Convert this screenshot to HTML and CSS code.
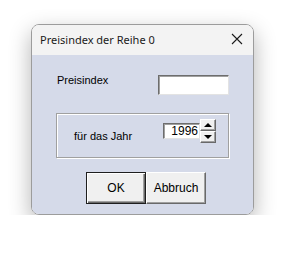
FILE: index.html
```html
<!DOCTYPE html>
<html lang="de">
<head>
    <meta charset="UTF-8">
    <title>Preisindex der Reihe 0</title>
    <link rel="stylesheet" href="styles.css">
</head>
<body>
    <div class="dialog">
        <div class="titlebar">
            <span class="title">Preisindex der Reihe 0</span>
            <svg class="close" width="12" height="12" viewBox="0 0 12 12">
                <path d="M1 1 L11 11 M11 1 L1 11" stroke="#1b1b1b" stroke-width="1.1" fill="none"/>
            </svg>
        </div>
        <div class="client">
            <div class="price-row">
                <span class="label">Preisindex</span>
                <input type="text" class="field price-field">
            </div>
            <div class="group">
                <span class="label year-label">für das Jahr</span>
                <input type="text" class="field year-field" value="1996">
                <div class="spin">
                    <div class="spin-btn up"><span class="arrow-up"></span></div>
                    <div class="spin-btn down"><span class="arrow-down"></span></div>
                </div>
            </div>
            <div class="buttons">
                <button class="btn default">OK</button>
                <button class="btn">Abbruch</button>
            </div>
        </div>
    </div>
</body>
</html>
```

FILE: styles.css
```css
body {
    margin: 0;
    padding: 24px 0 0 31px;
    background-color: #ffffff;
    font-family: "Liberation Sans", Arial, sans-serif;
}
.dialog {
    width: 223px;
    height: 191px;
    box-sizing: border-box;
    border: 1px solid #9c9c9c;
    border-radius: 8px;
    overflow: hidden;
    box-shadow: 0 8px 22px rgba(0,0,0,0.3);
}
.titlebar {
    height: 30px;
    background-color: #f3f3f3;
    display: flex;
    align-items: center;
    justify-content: space-between;
    padding: 0 10px 0 8px;
}
.title {
    font-family: "Noto Sans", "Open Sans", sans-serif;
    font-size: 11px;
    color: #1a1a1a;
    margin-top: -2px;
}
.close {
    margin-top: -3px;
}
.client {
    height: 159px;
    box-sizing: border-box;
    background-color: #d5dae9;
    padding: 20px 0 0 24px;
}
.label {
    font-size: 11px;
    color: #000;
}
.price-row {
    width: 173px;
    display: flex;
    justify-content: space-between;
    align-items: flex-start;
}
.price-row .label {
    padding-left: 1px;
    margin-top: -1px;
}
.field {
    box-sizing: border-box;
    margin: 0;
    background: #fff;
    border: 1px solid;
    border-color: #6d6d6d #e3e3e3 #e3e3e3 #6d6d6d;
    box-shadow: inset 1px 1px #a0a0a0;
    font-family: "Liberation Sans", Arial, sans-serif;
    font-size: 12px;
    outline: none;
}
.price-field {
    width: 71px;
    height: 20px;
}
.group {
    margin-top: 18px;
    width: 173px;
    height: 45px;
    box-sizing: border-box;
    border: 1px solid #a0a0a0;
    box-shadow: 1px 1px #fff, inset 1px 1px #fff;
    display: flex;
    align-items: flex-start;
    padding-left: 17px;
}
.year-label {
    width: 89px;
    margin-top: 16px;
}
.year-field {
    width: 37px;
    height: 16px;
    margin-top: 9px;
    padding: 0 1px 0 0;
    text-align: right;
    font-size: 12px;
    line-height: 14px;
}
.spin {
    margin-top: 5px;
    display: flex;
    flex-direction: column;
}
.spin-btn {
    width: 16px;
    height: 12px;
    box-sizing: border-box;
    background-color: #f0f0f0;
    border: 1px solid;
    border-color: #fff #696969 #696969 #fff;
    box-shadow: inset -1px -1px #a0a0a0;
    display: flex;
    align-items: center;
    justify-content: center;
}
.arrow-up {
    width: 0;
    height: 0;
    border-left: 4px solid transparent;
    border-right: 4px solid transparent;
    border-bottom: 4px solid #000;
}
.arrow-down {
    width: 0;
    height: 0;
    border-left: 4px solid transparent;
    border-right: 4px solid transparent;
    border-top: 4px solid #000;
}
.buttons {
    margin: 14px 0 0 30px;
    display: flex;
}
.btn {
    width: 60px;
    height: 32px;
    box-sizing: border-box;
    margin: 0;
    background-color: #f0f0f0;
    border: 1px solid;
    border-color: #fff #696969 #696969 #fff;
    box-shadow: inset -1px -1px #a0a0a0;
    font-family: "Liberation Sans", Arial, sans-serif;
    font-size: 12px;
    color: #000;
    padding: 0;
}
.btn.default {
    border: 1px solid #1e1e1e;
    box-shadow: inset 1px 1px #fff, inset -1px -1px #696969, inset -2px -2px #a0a0a0;
}
```
